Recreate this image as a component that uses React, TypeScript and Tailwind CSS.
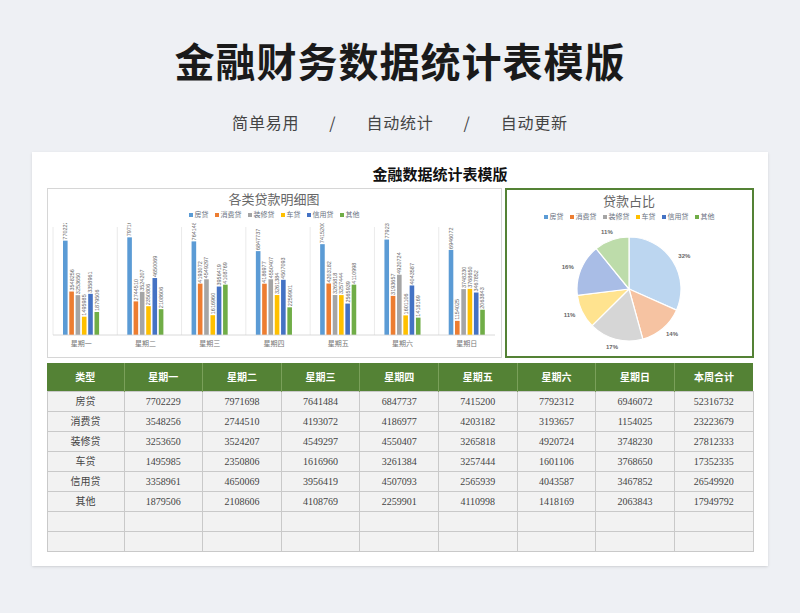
const FONT = { fontFamily: '"Noto Sans CJK SC", "Noto Sans", sans-serif' };
const SERIF = { fontFamily: '"Liberation Serif", "Noto Sans CJK SC", serif' };

const DAYS = ['星期一', '星期二', '星期三', '星期四', '星期五', '星期六', '星期日'];
const TYPES = ['房贷', '消费贷', '装修贷', '车贷', '信用贷', '其他'];
const COLORS = ['#5b9bd5', '#ed7d31', '#a5a5a5', '#ffc000', '#4472c4', '#70ad47'];

const DATA = [
  [7702229, 7971698, 7641484, 6847737, 7415200, 7792312, 6946072, 52316732],
  [3548256, 2744510, 4193072, 4186977, 4203182, 3193657, 1154025, 23223679],
  [3253650, 3524207, 4549297, 4550407, 3265818, 4920724, 3748230, 27812333],
  [1495985, 2350806, 1616960, 3261384, 3257444, 1601106, 3768650, 17352335],
  [3358961, 4650069, 3956419, 4507093, 2565939, 4043587, 3467852, 26549920],
  [1879506, 2108606, 4108769, 2259901, 4110998, 1418169, 2063843, 17949792],
];

function Legend() {
  return (
    <div className="flex justify-center gap-1.5 text-[7px] text-gray-500" style={SERIF}>
      {TYPES.map((t, i) => (
        <span key={t} className="flex items-center gap-0.5">
          <span className="inline-block w-[4px] h-[4px]" style={{ background: COLORS[i] }} />
          {t}
        </span>
      ))}
    </div>
  );
}

function BarChart() {
  const W = 450, H = 132, base = 112, top = 14, scale = (base - top) / 8000000;
  const gw = W / 7;
  return (
    <svg width={W} height={H} className="block">
      {DAYS.map((d, g) => {
        const x0 = g * gw;
        return (
          <g key={d}>
            <line x1={x0 + 4} y1={4} x2={x0 + 4} y2={base} stroke="#e5e5e5" strokeWidth={0.8} />
            {TYPES.map((_, s) => {
              const v = DATA[s][g];
              const h = v * scale;
              const x = x0 + 14 + s * 6.3;
              return (
                <g key={s}>
                  <rect x={x} y={base - h} width={4.6} height={h} fill={COLORS[s]} />
                  <text
                    x={0}
                    y={0}
                    fontSize={5.5}
                    fill="#666"
                    transform={`translate(${x + 4.2}, ${base - h - 1}) rotate(-90)`}
                    style={{ fontFamily: 'Liberation Sans, sans-serif' }}
                  >
                    {v}
                  </text>
                </g>
              );
            })}
            <text x={x0 + gw / 2} y={base + 11} fontSize={7} fill="#777" textAnchor="middle" style={SERIF}>
              {d}
            </text>
          </g>
        );
      })}
      <line x1={4} y1={base} x2={W - 4} y2={base} stroke="#d0d0d0" strokeWidth={0.8} />
    </svg>
  );
}

function PieChart() {
  const totals = DATA.map((r) => r[7]);
  const sum = totals.reduce((a, b) => a + b, 0);
  const cx = 75, cy = 66, r = 52;
  let a = -Math.PI / 2;
  const fills = ['#bcd6f0', '#f6c3a2', '#d6d6d6', '#ffe38f', '#a9bde6', '#bddcaa'];
  return (
    <svg width={150} height={132} className="block">
      {totals.map((t, i) => {
        const frac = t / sum;
        const a1 = a + frac * Math.PI * 2;
        const x0 = cx + r * Math.cos(a), y0 = cy + r * Math.sin(a);
        const x1 = cx + r * Math.cos(a1), y1 = cy + r * Math.sin(a1);
        const mid = (a + a1) / 2;
        const lx = cx + (r + 14) * Math.cos(mid), ly = cy + (r + 8) * Math.sin(mid);
        const large = frac > 0.5 ? 1 : 0;
        a = a1;
        return (
          <g key={i}>
            <path d={`M${cx},${cy} L${x0},${y0} A${r},${r} 0 ${large} 1 ${x1},${y1} Z`} fill={fills[i]} stroke="#fff" strokeWidth={1.2} />
            <text x={lx} y={ly + 2} fontSize={6} fontWeight={700} fill="#666" textAnchor="middle" style={{ fontFamily: 'Liberation Sans, sans-serif' }}>
              {Math.round(frac * 100)}%
            </text>
          </g>
        );
      })}
    </svg>
  );
}

export default function App() {
  return (
    <div className="w-[800px] h-[613px] bg-[#eef0f4] flex flex-col items-center overflow-hidden" style={FONT}>
      <h1 className="mt-[34px] text-[40px] leading-[52px] font-bold text-[#1a1a1a] tracking-wide">金融财务数据统计表模版</h1>
      <div className="mt-[24px] flex items-center gap-[30px] text-[16px] leading-[24px] text-[#444] tracking-wider">
        <span>简单易用</span>
        <span>/</span>
        <span>自动统计</span>
        <span>/</span>
        <span>自动更新</span>
      </div>
      <div className="mt-[18px] w-[736px] h-[414px] bg-white flex flex-col items-center shadow-sm">
        <div className="mt-[11px] text-[15px] font-bold text-[#111] leading-[22px] pl-[80px]">金融数据统计表模版</div>
        <div className="mt-[3px] w-[707px] flex gap-[3px]">
          <div className="w-[455px] h-[170px] border border-[#d6d6d6] flex flex-col items-center">
            <div className="mt-[2px] text-[13px] text-[#666] leading-[18px]" style={SERIF}>各类贷款明细图</div>
            <div className="mt-[1px]"><Legend /></div>
            <div className="mt-[2px]"><BarChart /></div>
          </div>
          <div className="flex-1 h-[170px] border-2 border-[#548235] flex flex-col items-center">
            <div className="mt-[3px] text-[13px] text-[#666] leading-[18px]" style={SERIF}>贷款占比</div>
            <div className="mt-[1px]"><Legend /></div>
            <div className="mt-[0px]"><PieChart /></div>
          </div>
        </div>
        <table className="mt-[5px] w-[707px] border-collapse table-fixed text-[10px] text-[#444]" style={SERIF}>
          <thead>
            <tr className="bg-[#548235] text-white h-[28px]">
              <th className="w-[77px] font-bold border-r border-[#7aa05a]" style={FONT}>类型</th>
              {[...DAYS, '本周合计'].map((d) => (
                <th key={d} className="font-bold border-r border-[#7aa05a] last:border-r-0" style={FONT}>{d}</th>
              ))}
            </tr>
          </thead>
          <tbody>
            {TYPES.map((t, i) => (
              <tr key={t} className="h-[20px] bg-[#f2f2f2]">
                <td className="text-center border border-[#c9c9c9]">{t}</td>
                {DATA[i].map((v, j) => (
                  <td key={j} className="text-center border border-[#c9c9c9]">{v}</td>
                ))}
              </tr>
            ))}
            {[0, 1].map((k) => (
              <tr key={k} className="h-[20px] bg-[#f2f2f2]">
                {Array.from({ length: 9 }).map((_, j) => (
                  <td key={j} className="border border-[#c9c9c9]" />
                ))}
              </tr>
            ))}
          </tbody>
        </table>
      </div>
    </div>
  );
}
